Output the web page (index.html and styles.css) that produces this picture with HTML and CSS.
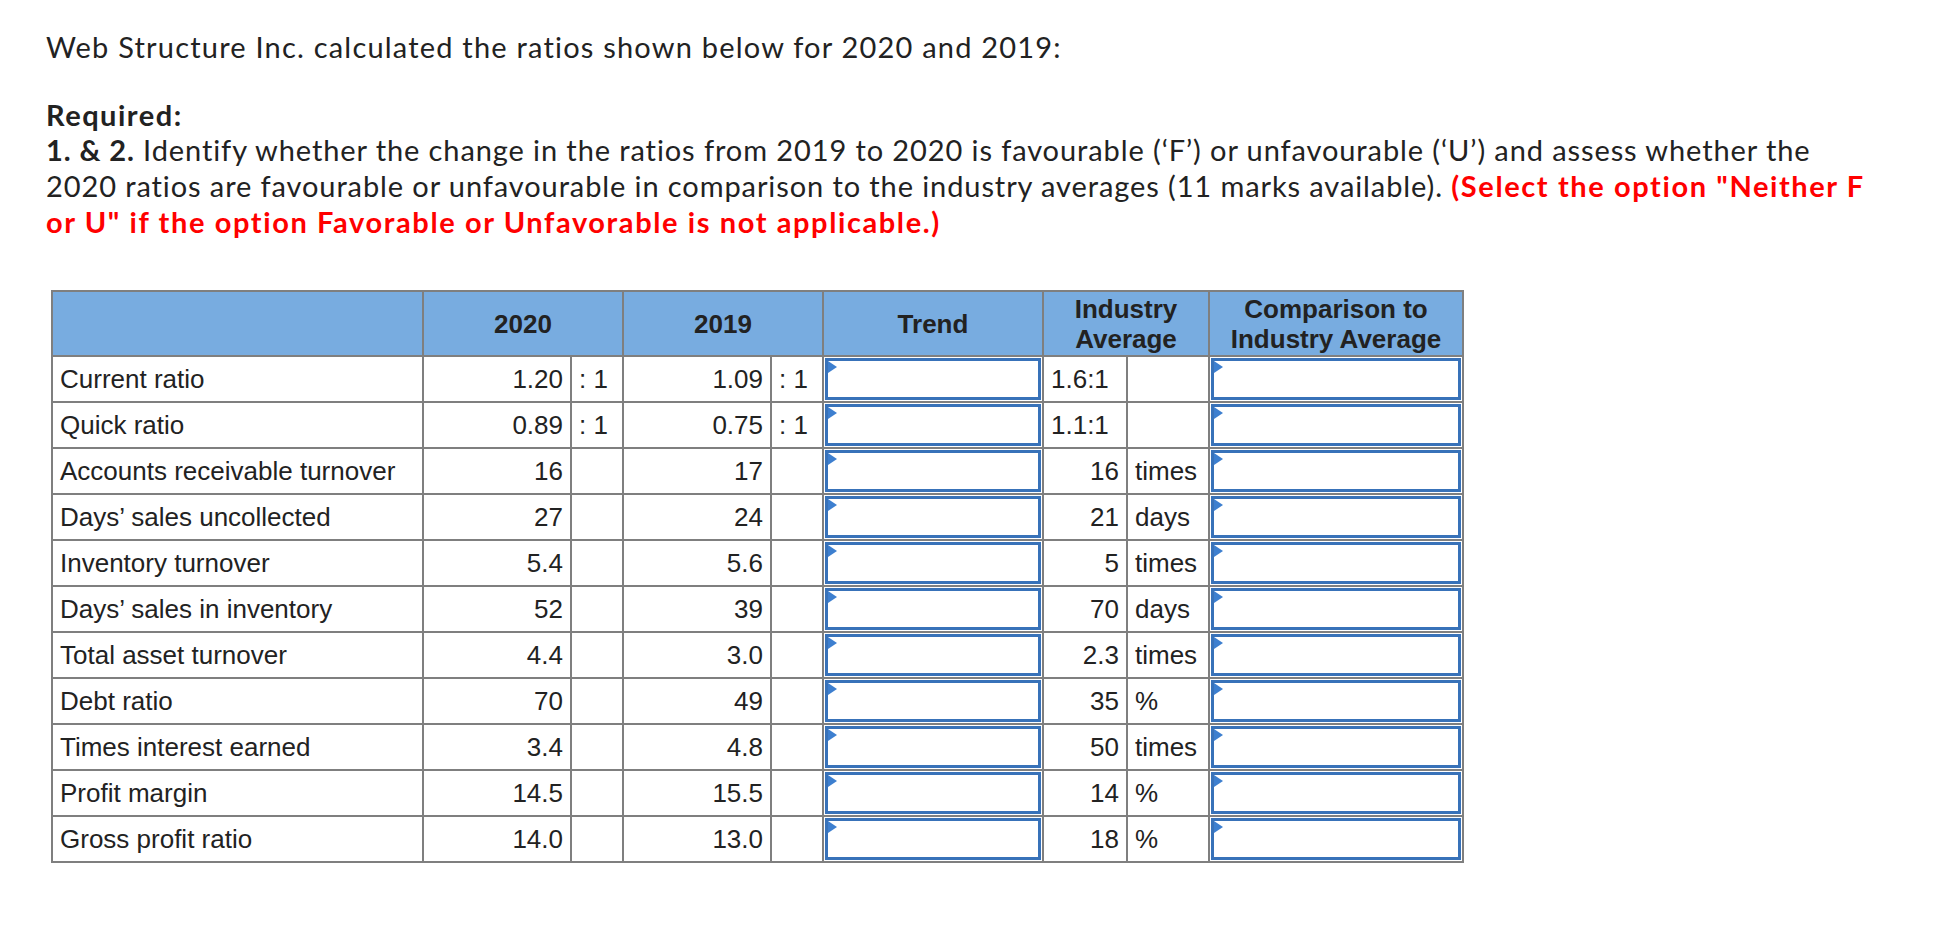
FILE: index.html
```html
<!DOCTYPE html>
<html>
<head>
<meta charset="utf-8">
<link rel="stylesheet" href="styles.css">
</head>
<body>
<div class="page">
  <p class="intro">Web Structure Inc. calculated the ratios shown below for 2020 and 2019:</p>
  <div class="required">Required:</div>
  <p class="task"><b>1. &amp; 2.</b> Identify whether the change in the ratios from 2019 to 2020 is favourable (‘F’) or unfavourable (‘U’) and assess whether the<br>2020 ratios are favourable or unfavourable in comparison to the industry averages (11 marks available). <span class="note">(Select the option "Neither F<br>or U" if the option Favorable or Unfavorable is not applicable.)</span></p>

  <table class="ratios">
    <colgroup>
      <col class="c-label"><col class="c-val"><col class="c-unit"><col class="c-val"><col class="c-unit"><col class="c-trend"><col class="c-ival"><col class="c-iunit"><col class="c-comp">
    </colgroup>
    <thead>
      <tr>
        <th></th>
        <th colspan="2">2020</th>
        <th colspan="2">2019</th>
        <th>Trend</th>
        <th colspan="2">Industry<br>Average</th>
        <th>Comparison to<br>Industry Average</th>
      </tr>
    </thead>
    <tbody>
      <tr><td class="lbl">Current ratio</td><td class="num">1.20</td><td class="unit">: 1</td><td class="num">1.09</td><td class="unit">: 1</td><td class="sel"><div class="box"><span class="tri"></span></div></td><td class="unit">1.6:1</td><td class="unit"></td><td class="sel"><div class="box"><span class="tri"></span></div></td></tr>
      <tr><td class="lbl">Quick ratio</td><td class="num">0.89</td><td class="unit">: 1</td><td class="num">0.75</td><td class="unit">: 1</td><td class="sel"><div class="box"><span class="tri"></span></div></td><td class="unit">1.1:1</td><td class="unit"></td><td class="sel"><div class="box"><span class="tri"></span></div></td></tr>
      <tr><td class="lbl">Accounts receivable turnover</td><td class="num">16</td><td class="unit"></td><td class="num">17</td><td class="unit"></td><td class="sel"><div class="box"><span class="tri"></span></div></td><td class="num">16</td><td class="unit">times</td><td class="sel"><div class="box"><span class="tri"></span></div></td></tr>
      <tr><td class="lbl">Days’ sales uncollected</td><td class="num">27</td><td class="unit"></td><td class="num">24</td><td class="unit"></td><td class="sel"><div class="box"><span class="tri"></span></div></td><td class="num">21</td><td class="unit">days</td><td class="sel"><div class="box"><span class="tri"></span></div></td></tr>
      <tr><td class="lbl">Inventory turnover</td><td class="num">5.4</td><td class="unit"></td><td class="num">5.6</td><td class="unit"></td><td class="sel"><div class="box"><span class="tri"></span></div></td><td class="num">5</td><td class="unit">times</td><td class="sel"><div class="box"><span class="tri"></span></div></td></tr>
      <tr><td class="lbl">Days’ sales in inventory</td><td class="num">52</td><td class="unit"></td><td class="num">39</td><td class="unit"></td><td class="sel"><div class="box"><span class="tri"></span></div></td><td class="num">70</td><td class="unit">days</td><td class="sel"><div class="box"><span class="tri"></span></div></td></tr>
      <tr><td class="lbl">Total asset turnover</td><td class="num">4.4</td><td class="unit"></td><td class="num">3.0</td><td class="unit"></td><td class="sel"><div class="box"><span class="tri"></span></div></td><td class="num">2.3</td><td class="unit">times</td><td class="sel"><div class="box"><span class="tri"></span></div></td></tr>
      <tr><td class="lbl">Debt ratio</td><td class="num">70</td><td class="unit"></td><td class="num">49</td><td class="unit"></td><td class="sel"><div class="box"><span class="tri"></span></div></td><td class="num">35</td><td class="unit">%</td><td class="sel"><div class="box"><span class="tri"></span></div></td></tr>
      <tr><td class="lbl">Times interest earned</td><td class="num">3.4</td><td class="unit"></td><td class="num">4.8</td><td class="unit"></td><td class="sel"><div class="box"><span class="tri"></span></div></td><td class="num">50</td><td class="unit">times</td><td class="sel"><div class="box"><span class="tri"></span></div></td></tr>
      <tr><td class="lbl">Profit margin</td><td class="num">14.5</td><td class="unit"></td><td class="num">15.5</td><td class="unit"></td><td class="sel"><div class="box"><span class="tri"></span></div></td><td class="num">14</td><td class="unit">%</td><td class="sel"><div class="box"><span class="tri"></span></div></td></tr>
      <tr><td class="lbl">Gross profit ratio</td><td class="num">14.0</td><td class="unit"></td><td class="num">13.0</td><td class="unit"></td><td class="sel"><div class="box"><span class="tri"></span></div></td><td class="num">18</td><td class="unit">%</td><td class="sel"><div class="box"><span class="tri"></span></div></td></tr>
    </tbody>
  </table>
</div>
</body>
</html>
```

FILE: styles.css
```css
html, body {
  margin: 0;
  padding: 0;
  background: #ffffff;
}

.page {
  padding: 28px 0 0 46px;
  font-family: Lato, "Open Sans", sans-serif;
  font-size: 29px;
  letter-spacing: 0.9px;
  color: #222222;
}

.intro {
  margin: 0;
  line-height: 38px;
  letter-spacing: 1.2px;
}

.required {
  margin-top: 32px;
  font-weight: 700;
  line-height: 34px;
  letter-spacing: 1.5px;
}

.task {
  margin: 0;
  line-height: 36px;
}

.task b {
  font-weight: 700;
}

.note {
  color: #ff0000;
  font-weight: 700;
  letter-spacing: 1.6px;
}

.ratios {
  margin-top: 50px;
  margin-left: 5px;
  border-collapse: collapse;
  table-layout: fixed;
  width: 1413px;
  font-family: "Liberation Sans", Arial, sans-serif;
  font-size: 26px;
  letter-spacing: 0;
  color: #222222;
}

.c-label { width: 371px; }
.c-val { width: 148px; }
.c-unit { width: 52px; }
.c-trend { width: 220px; }
.c-ival { width: 84px; }
.c-iunit { width: 82px; }
.c-comp { width: 254px; }

.ratios th,
.ratios td {
  border: 2px solid #7f7f7f;
  vertical-align: middle;
}

.ratios thead tr {
  height: 65px;
}

.ratios th {
  background: #78ace0;
  font-weight: 700;
  text-align: center;
  line-height: 30px;
  padding: 0 4px;
}

.ratios tbody tr {
  height: 46px;
}

.ratios td {
  padding: 0 7px;
  white-space: nowrap;
}

.ratios td.num {
  text-align: right;
}

.ratios td.unit,
.ratios td.lbl {
  text-align: left;
}

.ratios td.sel {
  padding: 1px;
}

.box {
  position: relative;
  height: 42px;
  box-sizing: border-box;
  border: 3px solid #3872b9;
  background: #ffffff;
}

.tri {
  position: absolute;
  left: 0;
  top: 0;
  width: 0;
  height: 0;
  border-left: 9px solid #3d7fcf;
  border-top: 6px solid transparent;
  border-bottom: 6px solid transparent;
}
```
